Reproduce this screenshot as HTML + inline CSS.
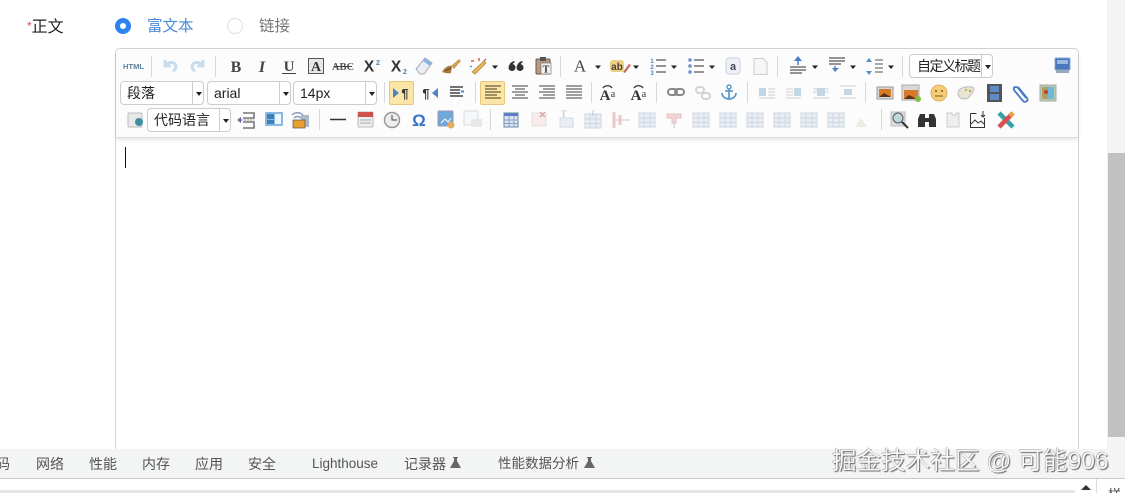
<!DOCTYPE html>
<html lang="zh">
<head>
<meta charset="utf-8">
<title>正文</title>
<style>
html{background:#fff}
html,body{margin:0;padding:0;width:1125px;height:493px;overflow:hidden}
body{background:#fff;font-family:"Liberation Sans","Noto Sans CJK SC",sans-serif;filter:blur(.35px)}
.a{position:absolute;white-space:nowrap}
.sel{position:absolute;height:24px;width:83px;border:1px solid #ccc;border-radius:4px;background:#fff;color:#222;font-size:14px;line-height:23px;box-sizing:border-box}
.sel span{position:absolute;left:6px;top:0;white-space:nowrap}
.sel i{position:absolute;right:10px;top:0;bottom:0;width:0;border-left:1px solid #ccc}
.sel b{position:absolute;right:1px;top:10px;width:0;height:0;border:3px solid transparent;border-top:4px solid #222;border-bottom:0}
.tab{position:absolute;top:456px;font-size:14px;color:#555;line-height:16px;white-space:nowrap}
</style>
</head>
<body>
<!-- form label and radios -->
<div class="a" style="left:27px;top:16px;font-size:16px;line-height:20px;color:#222"><span style="color:#e04b4b;font-size:12px;vertical-align:2px">*</span>正文</div>
<div class="a" style="left:115px;top:18px;width:16px;height:16px;border-radius:50%;background:#2d84f0"></div>
<div class="a" style="left:120px;top:23px;width:6px;height:6px;border-radius:50%;background:#fff"></div>
<div class="a" style="left:147px;top:17px;font-size:15.500px;line-height:20px;color:#4a8bd6">富文本</div>
<div class="a" style="left:227px;top:18px;width:14px;height:14px;border-radius:50%;border:1px solid #dcdfe6;background:#fff"></div>
<div class="a" style="left:259px;top:17px;font-size:15.500px;line-height:20px;color:#777">链接</div>

<!-- right scrollbar -->
<div class="a" style="left:1107px;top:0;width:18px;height:449px;background:#f4f4f4"></div>
<div class="a" style="left:1108px;top:153px;width:17px;height:284px;background:#c1c1c1"></div>

<!-- editor -->
<div class="a" style="left:115px;top:48px;width:964px;height:410px;box-sizing:border-box;border:1px solid #d4d4d4;border-radius:5px 5px 0 0;background:#fff"></div>
<div class="a" style="left:116px;top:49px;width:962px;height:88px;background:#fcfcfc;border-bottom:1px solid #ddd;box-shadow:0 2px 4px rgba(0,0,0,.1);border-radius:4px 4px 0 0"></div>
<div class="a" style="left:125px;top:147px;width:1px;height:21px;background:#111"></div>

<!-- toolbar selects -->
<div class="sel" style="left:120px;top:81px;width:84px"><span>段落</span><i></i><b></b></div>
<div class="sel" style="left:207px;top:81px;width:84px"><span>arial</span><i></i><b></b></div>
<div class="sel" style="left:293px;top:81px;width:84px"><span>14px</span><i></i><b></b></div>
<div class="sel" style="left:147px;top:108px;width:84px"><span>代码语言</span><i></i><b></b></div>
<div class="sel" style="left:909px;top:54px;width:84px"><span style="left:7px;letter-spacing:-1.500px">自定义标题</span><i></i><b></b></div>

<!-- toolbar active backgrounds -->
<div class="a" style="left:389px;top:81px;width:25px;height:24px;box-sizing:border-box;background:#fbe6a8;border:1px solid #e6c77c;border-radius:2px"></div>
<div class="a" style="left:480px;top:81px;width:25px;height:24px;box-sizing:border-box;background:#fbe6a8;border:1px solid #e6c77c;border-radius:2px"></div>

<!-- icons -->
<svg class="a" style="left:0;top:0" width="1125" height="493" viewBox="0 0 1125 493" font-family="Liberation Serif,serif">
<defs>
<g id="sep"><rect x="0" y="-10" width="1" height="21" fill="#d8d8d8"/></g>
<path id="dn" d="M-3-1.500H3L0 2Z" fill="#222"/>
<g id="tbl" opacity=".55"><rect x="-8" y="-7" width="16" height="14" fill="#dbe4f0" stroke="#a9b8cc"/><path d="M-8-2H8M-8 2.500H8M-3-7V7M3-7V7" stroke="#a9b8cc" fill="none"/></g>
<g id="al" opacity=".7"><rect x="-8" y="-5" width="7" height="8" fill="#a9c8dc"/><path d="M1-4H8M1-1H8M1 2H8M-8 5H8" stroke="#bbb"/></g>
</defs>

<!-- separators -->
<use href="#sep" x="151" y="66"/><use href="#sep" x="215" y="66"/><use href="#sep" x="560" y="66"/><use href="#sep" x="777" y="66"/><use href="#sep" x="902" y="66"/>
<use href="#sep" x="384" y="92"/><use href="#sep" x="475" y="92"/><use href="#sep" x="591" y="92"/><use href="#sep" x="656" y="92"/><use href="#sep" x="747" y="92"/><use href="#sep" x="865" y="92"/>
<use href="#sep" x="319" y="119"/><use href="#sep" x="490" y="119"/><use href="#sep" x="881" y="119"/>

<!-- row 1 -->
<text x="123" y="69" font-family="Liberation Sans" font-size="7.500" font-weight="700" fill="#5b7f9c" textLength="21">HTML</text>
<path d="M165 60v6h6M166 65c3-4 9-3 10 1 0 2-1 4-3 5" fill="none" stroke="#c8dcec" stroke-width="3"/>
<path d="M203 60v6h-6M202 65c-3-4-9-3-10 1 0 2 1 4 3 5" fill="none" stroke="#c8dcec" stroke-width="3"/>
<text x="236" y="72" text-anchor="middle" font-size="16" font-weight="700" fill="#444">B</text>
<text x="262" y="72" text-anchor="middle" font-size="16" font-weight="700" font-style="italic" fill="#444">I</text>
<text x="289" y="71" text-anchor="middle" font-size="15" font-weight="700" fill="#444">U</text><path d="M282 73.500H296" stroke="#444"/>
<rect x="308.500" y="58.500" width="15" height="15" fill="#e8e8e8" stroke="#555"/><text x="316" y="71" text-anchor="middle" font-size="14" font-weight="700" fill="#333">A</text>
<text x="343" y="70" text-anchor="middle" font-size="10.500" font-weight="700" fill="#555">ABC</text><path d="M334 66.500H352" stroke="#444"/>
<text x="369" y="71.500" text-anchor="middle" font-family="Liberation Sans" font-size="15.500" font-weight="700" fill="#333">X</text><text x="378" y="65" font-family="Liberation Sans" font-size="7" font-weight="700" fill="#4a7fb5" text-anchor="middle">2</text>
<text x="396" y="71.500" text-anchor="middle" font-family="Liberation Sans" font-size="15.500" font-weight="700" fill="#333">X</text><text x="405" y="74" font-family="Liberation Sans" font-size="7" font-weight="700" fill="#4a7fb5" text-anchor="middle">2</text>
<path d="M416 69l9-11 7 5-8 11h-4z" fill="#e9eef3" stroke="#aab"/><path d="M423 61l7 5 2-3-7-5z" fill="#8bb4dc"/>
<path d="M444 69c3-3 6-4 8-3l-1 7c-3 1-6 0-9-1z" fill="#a77b42"/><path d="M451 66l8-7 2 2-7 8z" fill="#caa05c"/><path d="M445 71l6-3" stroke="#6b4a22"/>
<path d="M472 72l12-11 2 2-11 11z" fill="#e8b95a" stroke="#a97d2d" stroke-width=".7"/><path d="M471 61h3M479 58v3M486 59l-2 2" stroke="#d8604a" stroke-width="1.500"/><path d="M470 66l2 1" stroke="#5a9ad8" stroke-width="1.500"/>
<use href="#dn" x="495" y="67"/>
<circle cx="512" cy="67.500" r="3.500" fill="#333"/><path d="M509 67c0-3 2-5 5-6l1 1c-2 1-3 3-3 5z" fill="#333"/>
<circle cx="520" cy="67.500" r="3.500" fill="#333"/><path d="M517 67c0-3 2-5 5-6l1 1c-2 1-3 3-3 5z" fill="#333"/>
<rect x="536" y="59" width="14" height="15" rx="1" fill="#b59a84" stroke="#6b5644"/><rect x="540" y="57" width="6" height="4" fill="#555"/><rect x="541" y="63" width="10" height="11" fill="#f2f2f2" stroke="#666" stroke-width=".6"/><text x="546" y="72.500" text-anchor="middle" font-size="10" font-weight="700" fill="#333">T</text>
<text x="580" y="71.500" text-anchor="middle" font-size="17" fill="#444">A</text><use href="#dn" x="598" y="67"/>
<rect x="610" y="60" width="14" height="12" rx="3" fill="#edcf85"/><text x="617" y="70" text-anchor="middle" font-family="Liberation Sans" font-size="10" font-weight="700" fill="#443">ab</text><path d="M623 72l6-8 2 1-6 8z" fill="#c56a5a"/><use href="#dn" x="636" y="67"/>
<text x="652" y="63" font-family="Liberation Sans" font-size="6" fill="#4a7fc5" text-anchor="middle" font-weight="700">1</text><text x="652" y="69" font-family="Liberation Sans" font-size="6" fill="#4a7fc5" text-anchor="middle" font-weight="700">2</text><text x="652" y="75" font-family="Liberation Sans" font-size="6" fill="#4a7fc5" text-anchor="middle" font-weight="700">3</text><path d="M656 60h10M656 66h10M656 72h10" stroke="#555" stroke-width="1.200"/><use href="#dn" x="674" y="67"/>
<circle cx="690" cy="60" r="1.800" fill="#6f8fd0"/><circle cx="690" cy="66" r="1.800" fill="#6f8fd0"/><circle cx="690" cy="72" r="1.800" fill="#6f8fd0"/><path d="M694 60h10M694 66h10M694 72h10" stroke="#555" stroke-width="1.200"/><use href="#dn" x="712" y="67"/>
<rect x="726" y="58" width="14" height="16" rx="3" fill="#eef2f6" stroke="#ccd"/><text x="733" y="70" text-anchor="middle" font-family="Liberation Sans" font-size="11" font-weight="700" fill="#445">a</text>
<path d="M754 58.500h9l4 4v12h-13z" fill="#f6f6f6" stroke="#ccc"/>
<path d="M798 56l-4 5h8z" fill="#4a7fc5"/><path d="M798 60v5" stroke="#4a7fc5" stroke-width="1.500"/><path d="M790 67h16M790 70h16M790 73h12" stroke="#555" stroke-width="1.300"/><use href="#dn" x="815" y="67"/>
<path d="M829 58h16M829 61h16M829 64h12" stroke="#555" stroke-width="1.300"/><path d="M835 72l-3-4h7z" fill="#5a7fc0"/><path d="M835 66v4" stroke="#5a7fc0" stroke-width="1.500"/><use href="#dn" x="853" y="67"/>
<path d="M869 58l-3 4h6zM869 75l-3-4h6z" fill="#5a8fc5"/><path d="M875 60h8M875 64h8M875 68h8M875 72h8" stroke="#555"/><use href="#dn" x="891" y="67"/>
<rect x="1055" y="58" width="15" height="12" rx="1" fill="#4a78c0" stroke="#8ba6c8"/><rect x="1057" y="60" width="11" height="4" fill="#9bb8df"/><rect x="1056" y="70" width="13" height="3" fill="#9aa8b8"/>

<!-- row 2 -->
<path d="M393 88l6 5-6 5z" fill="#4a85c5"/><text x="405" y="98" text-anchor="middle" font-family="Liberation Sans" font-size="13" font-weight="700" fill="#333">¶</text>
<text x="426" y="98" text-anchor="middle" font-family="Liberation Sans" font-size="13" font-weight="700" fill="#333">¶</text><path d="M438 88l-6 5 6 5z" fill="#4a85c5"/>
<path d="M450 87h13M450 90h10M450 93h10M450 96h13" stroke="#444" stroke-width="1.400"/><path d="M461 91.500h3" stroke="#4a85c5" stroke-width="2"/>
<path d="M485 86h16M485 89h12M485 92h16M485 95h12M485 98h16" stroke="#6a5c30" stroke-width="1.300"/>
<path d="M512 86h16M515 89h10M512 92h16M515 95h10M512 98h16" stroke="#666" stroke-width="1.300"/>
<path d="M539 86h16M543 89h12M539 92h16M543 95h12M539 98h16" stroke="#666" stroke-width="1.300"/>
<path d="M566 86h16M566 89h16M566 92h16M566 95h16M566 98h16" stroke="#666" stroke-width="1.300"/>
<text x="605" y="100" text-anchor="middle" font-size="15" font-weight="700" fill="#333">A</text><text x="613" y="97" text-anchor="middle" font-size="10" fill="#333">a</text><path d="M603 88c2-3 7-3 9 0" fill="none" stroke="#333" stroke-width="1.300"/>
<text x="636" y="100" text-anchor="middle" font-size="15" font-weight="700" fill="#333">A</text><text x="644" y="97" text-anchor="middle" font-size="10" fill="#333">a</text><path d="M634 88c2-3 7-3 9 0" fill="none" stroke="#333" stroke-width="1.300"/>
<rect x="668" y="89" width="9" height="6" rx="3" fill="none" stroke="#888" stroke-width="2"/><rect x="675" y="89" width="9" height="6" rx="3" fill="none" stroke="#888" stroke-width="2"/>
<g opacity=".35"><rect x="696" y="87" width="8" height="6" rx="3" fill="none" stroke="#888" stroke-width="2"/><rect x="702" y="93" width="8" height="6" rx="3" fill="none" stroke="#888" stroke-width="2"/></g>
<circle cx="729" cy="87" r="2" fill="none" stroke="#5f9cc8" stroke-width="1.500"/><path d="M729 89v10M725 91h8M722 93c0 4 4 6 7 6s7-2 7-6" fill="none" stroke="#5f9cc8" stroke-width="1.800"/>
<use href="#al" x="767" y="93"/>
<g opacity=".7"><rect x="794" y="88" width="7" height="8" fill="#a9c8dc"/><path d="M786 89h7M786 92h7M786 95h7M786 98h15" stroke="#bbb"/></g>
<g opacity=".7"><rect x="817" y="88" width="8" height="8" fill="#a9c8dc"/><path d="M813 89h4M825 89h4M813 92h4M825 92h4M813 98h16" stroke="#bbb"/></g>
<g opacity=".7"><rect x="844" y="89" width="8" height="6" fill="#a9c8dc"/><path d="M840 86h16M840 98h16" stroke="#bbb"/></g>
<rect x="877" y="87" width="16" height="12" fill="#d8d8d8" stroke="#999"/><rect x="879" y="89" width="12" height="8" fill="#d9792a"/><path d="M879 97l5-4 7 4z" fill="#5d3312"/>
<rect x="902" y="85" width="17" height="15" fill="#d8d8d8" stroke="#aaa"/><rect x="904" y="90" width="14" height="9" fill="#d9792a"/><path d="M904 99l5-4 8 4z" fill="#5d3312"/><circle cx="918" cy="99" r="3" fill="#80c040"/>
<circle cx="939" cy="93" r="8" fill="#f5cc78" stroke="#e0b060"/><circle cx="936" cy="91" r="1" fill="#7a5520"/><circle cx="942" cy="91" r="1" fill="#7a5520"/><path d="M935 96h8" stroke="#7a5520"/>
<path d="M958 93c0-5 8-7 14-6 3 1 2 4 0 6-2 3-3 6-7 6-4 0-7-2-7-6z" fill="#e8e4d4" stroke="#bbb"/><circle cx="966" cy="90" r="1.200" fill="#a8c060"/><circle cx="970" cy="91" r="1.200" fill="#d89050"/>
<rect x="987" y="84" width="15" height="18" fill="#555"/><rect x="990" y="86" width="9" height="6" fill="#5f8cc8"/><rect x="990" y="94" width="9" height="6" fill="#5f8cc8"/>
<path d="M1018 87l9 11c2 3-2 5-4 3l-9-11c-1-3 2-4 4-2l8 10" fill="none" stroke="#4a78c8" stroke-width="1.800"/>
<rect x="1040" y="85" width="16" height="16" fill="#b8c8b0" stroke="#aaa"/><rect x="1042" y="87" width="6" height="12" fill="#b0a060"/><rect x="1048" y="87" width="6" height="12" fill="#70b8d8"/><circle cx="1046" cy="92" r="2" fill="#c04030"/>

<!-- row 3 -->
<rect x="128" y="113" width="14" height="14" rx="1" fill="#e8e8e8" stroke="#bbb"/><circle cx="139" cy="122" r="4" fill="#3f8fa0"/>
<path d="M237 120l4-3v6z" fill="#5a5ac0"/><path d="M243 113h11v5h-11M243 122h11v6h-11" fill="none" stroke="#777" stroke-width="1.600"/><path d="M238 120h16" stroke="#888" stroke-dasharray="2 1"/>
<rect x="265" y="112" width="18" height="14" rx="1" fill="#8ab8e0"/><rect x="267" y="114" width="7" height="5" fill="#3f80b8"/><rect x="275" y="114" width="6" height="10" fill="#eef5fb"/><rect x="267" y="120" width="7" height="4" fill="#3f80b8"/>
<path d="M292 115c3-3 8-3 11 0M294 118c2-2 5-2 7 0" fill="none" stroke="#8aa0c0" stroke-width="1.500"/><rect x="301" y="115" width="8" height="12" fill="#a8b8c8"/><rect x="293" y="120" width="12" height="8" fill="#e8a030" stroke="#555" stroke-width=".7"/>
<path d="M330 119.500h16" stroke="#333" stroke-width="1.500"/>
<rect x="358" y="112" width="15" height="15" rx="1" fill="#eee" stroke="#bbb"/><rect x="358" y="112" width="15" height="5" fill="#d05050"/><path d="M360 120h11M360 123h11" stroke="#aaa"/>
<circle cx="392" cy="120" r="7.500" fill="#eee" stroke="#999" stroke-width="1.500"/><path d="M392 115v5h5" stroke="#444" fill="none"/>
<text x="419" y="126" text-anchor="middle" font-family="Liberation Sans" font-size="17" font-weight="700" fill="#3a72c8">Ω</text>
<rect x="438" y="111" width="15" height="15" rx="1" fill="#6fa8d8" stroke="#99b"/><path d="M441 123l4-4 3 3 3-4" stroke="#fff" fill="none"/><circle cx="451" cy="125" r="3.500" fill="#e0b060"/>
<g opacity=".4"><rect x="464" y="111" width="14" height="14" fill="#eef4fa" stroke="#9ab"/><rect x="471" y="119" width="11" height="8" fill="#ccc"/></g>
<rect x="504" y="113" width="14" height="14" fill="#dbe6f5" stroke="#6a86ad"/><rect x="504" y="113" width="14" height="3" fill="#5a80c0"/><path d="M504 120h14M504 123.500h14M509 116v11M514 116v11" stroke="#8aa0c0"/>
<g opacity=".55"><rect x="532" y="113" width="14" height="13" fill="#f3dede" stroke="#ccb"/><path d="M540 112l5 5M545 112l-5 5" stroke="#d06060" stroke-width="1.500"/></g>
<g opacity=".5"><rect x="560" y="118" width="13" height="9" fill="#dbe4f0" stroke="#a9b8cc"/><text x="561" y="117" font-size="9" fill="#777">T</text></g>
<use href="#tbl" x="593" y="121"/><path d="M593 110v6" stroke="#9ab" opacity=".6"/>
<g opacity=".55"><path d="M614 112v16M620 115v10" stroke="#dba0a0" stroke-width="3"/><path d="M613 120h17" stroke="#c09090"/></g>
<use href="#tbl" x="647" y="120"/>
<g opacity=".55"><path d="M667 114h14v4h-5v5h-4v-5h-5z" fill="#e8b8b8" stroke="#d09090"/><path d="M674 123v5" stroke="#999"/></g>
<use href="#tbl" x="701" y="120"/><use href="#tbl" x="728" y="120"/><use href="#tbl" x="755" y="120"/><use href="#tbl" x="782" y="120"/><use href="#tbl" x="809" y="120"/><use href="#tbl" x="836" y="120"/>
<path d="M855 127l6-9 6 9z" fill="#e6e6d8" opacity=".7"/>
<rect x="891" y="112" width="14" height="14" fill="#ddd" stroke="#bbb"/><circle cx="898" cy="118" r="5" fill="#bcd8d8" stroke="#556"/><path d="M902 122l6 6" stroke="#333" stroke-width="2"/>
<path d="M920 114h5v13h-7v-8zM929 114h5l2 5v8h-7z" fill="#333"/><rect x="924" y="118" width="6" height="4" fill="#333"/>
<path d="M947 113h5v2h4v-2h3v14h-12z" fill="#eee" stroke="#ccc"/>
<path d="M970.500 113.500h6M984.500 118v9.500h-14v-14" fill="none" stroke="#333"/><path d="M971 124l4-4 3 3 3-2 3 3" fill="none" stroke="#333"/><path d="M983 111v6M981 115l2 2 2-2" fill="none" stroke="#333"/>
<path d="M999 113l14 14" stroke="#38a0a8" stroke-width="4.500"/><path d="M1013 113l-14 14" stroke="#d85050" stroke-width="4.500"/><path d="M1010 116l3-3" stroke="#e8a040" stroke-width="4.500"/>
</svg>

<!-- devtools bar -->
<div class="a" style="left:0;top:449px;width:1125px;height:29px;background:#f2f5f4"></div>
<div class="a" style="left:0;top:478px;width:1125px;height:1px;background:#c8c8c8"></div>
<div class="a" style="left:0;top:479px;width:1125px;height:11px;background:#fff"></div>
<div class="a" style="left:0;top:490px;width:1075px;height:3px;background:#e6e6e6"></div>
<div class="a" style="left:1096px;top:479px;width:1px;height:14px;background:#ddd"></div>
<div class="a" style="left:1081px;top:485px;width:0;height:0;border:5px solid transparent;border-bottom:5px solid #333;border-top:0"></div>
<div class="a" style="left:1108px;top:488px;font-size:13px;line-height:14px;color:#444">样</div>

<div class="tab" style="left:-4px">码</div>
<div class="tab" style="left:36px">网络</div>
<div class="tab" style="left:89px">性能</div>
<div class="tab" style="left:142px">内存</div>
<div class="tab" style="left:195px">应用</div>
<div class="tab" style="left:248px">安全</div>
<div class="tab" style="left:312px;font-size:13.500px">Lighthouse</div>
<div class="tab" style="left:404px">记录器</div>
<div class="tab" style="left:498px;font-size:13.500px">性能数据分析</div>
<svg class="a" style="left:449px;top:456px" width="150" height="14" viewBox="0 0 150 14">
<path d="M4 1h5v1H8v3l4 7H1l4-7V2H4z" fill="#666"/>
<path d="M138 1h5v1h-1v3l4 7h-11l4-7V2h-1z" fill="#666"/>
</svg>

<!-- watermark -->
<div class="a" style="left:832px;top:446px;font-size:24.500px;letter-spacing:.1px;line-height:32px;color:#f6f6f6;text-shadow:1px 1px 1px #666,-.5px -.5px .5px #999">掘金技术社区 @ 可能906</div>
</body>
</html>
